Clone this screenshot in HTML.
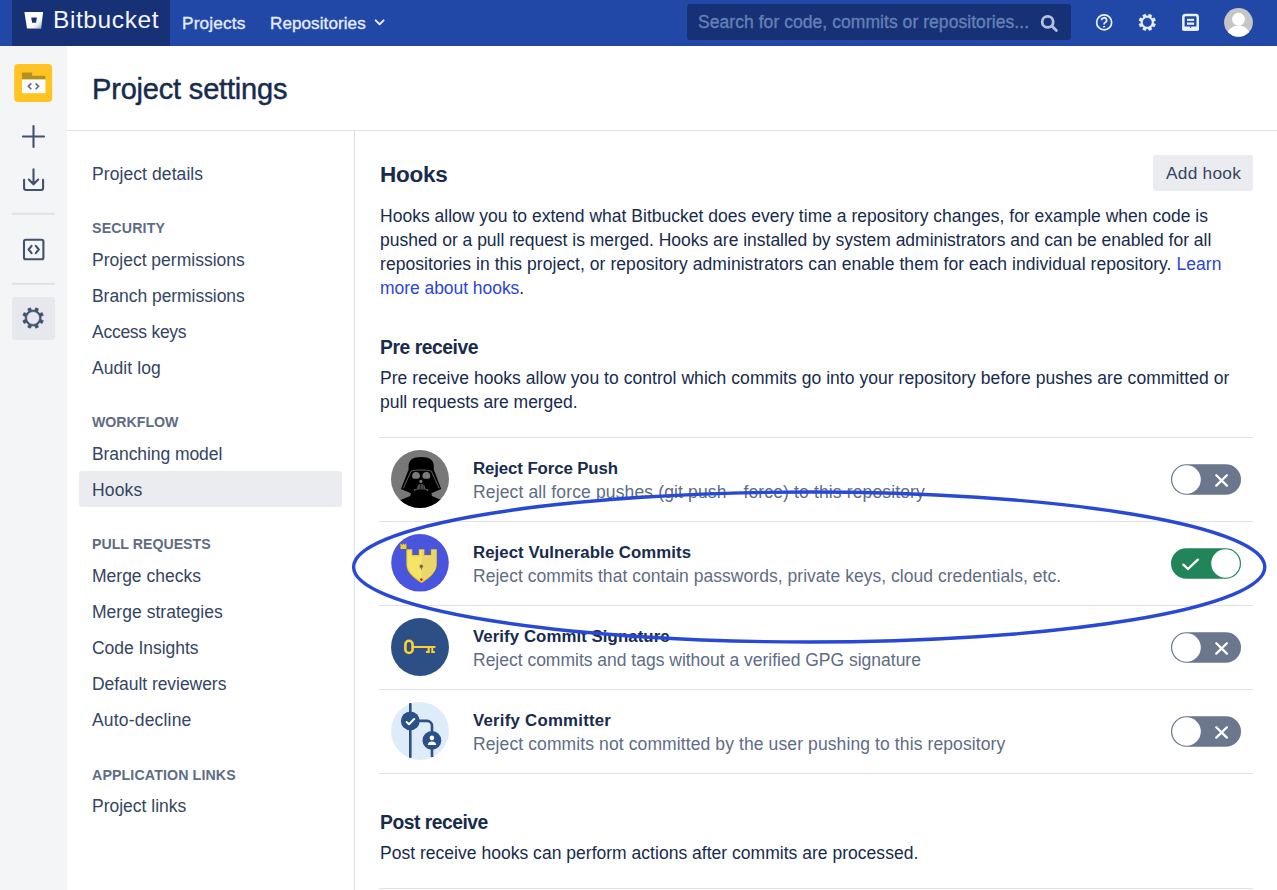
<!DOCTYPE html><html><head><meta charset="utf-8"><title>Hooks - Project settings</title><style>
html,body{margin:0;padding:0;}
body{width:1277px;height:890px;overflow:hidden;position:relative;background:#fff;font-family:"Liberation Sans", sans-serif;}
.t{position:absolute;white-space:nowrap;}
.a{position:absolute;}
.m{-webkit-text-stroke:0.35px currentColor;}
</style></head><body>
<div class="a" style="left:0;top:0;width:1277px;height:46px;background:#2148a6"></div>
<div class="a" style="left:12px;top:0;width:158px;height:46px;background:#173177"></div>
<svg class="a" style="left:0;top:0" width="60" height="46" viewBox="0 0 60 46">
<defs><linearGradient id="bg1" x1="0" y1="0" x2="1" y2="1"><stop offset="0.35" stop-color="#fff" stop-opacity="0"/><stop offset="1" stop-color="#173177" stop-opacity="0.55"/></linearGradient></defs>
<path d="M24.4 11.9 L43.1 11.9 L41.1 28.6 L27 28.6 Z" fill="#fff"/>
<path d="M31.5 17.5 L42.4 17.5 L41.1 28.6 L29.5 28.6 Z" fill="url(#bg1)"/>
<path d="M31.2 17.5 L36.9 17.5 L36.1 22.7 L32.1 22.7 Z" fill="#173177"/>
</svg>
<div class="t" style="left:53px;top:8px;font-size:24.5px;line-height:24.5px;color:#f4f6fb;font-weight:400;letter-spacing:0.590px;">Bitbucket</div>
<div class="t" style="left:182px;top:15px;font-size:17.3px;line-height:17.3px;color:#e3ecff;font-weight:400;letter-spacing:0.138px;"><span class="m">Projects</span></div>
<div class="t" style="left:270px;top:15px;font-size:17.1px;line-height:17.1px;color:#e3ecff;font-weight:400;letter-spacing:0.062px;"><span class="m">Repositories</span></div>
<svg class="a" style="left:372px;top:16px" width="16" height="12" viewBox="0 0 16 12"><path d="M3.7 4.4 L7.6 8.3 L11.6 4.4" stroke="#e3ecff" stroke-width="2" fill="none" stroke-linecap="round" stroke-linejoin="round"/></svg>
<div class="a" style="left:687px;top:4px;width:384px;height:36px;border-radius:3px;background:#173177"></div>
<div class="t" style="left:698px;top:14px;font-size:17.5px;line-height:17.5px;color:#6580b5;font-weight:400;letter-spacing:0.054px;"><span class="m">Search for code, commits or repositories...</span></div>
<svg class="a" style="left:1036px;top:11px" width="24" height="24" viewBox="0 0 24 24"><circle cx="11.7" cy="10.9" r="5.5" stroke="#b5c2df" stroke-width="2.8" fill="none"/><path d="M15.9 15.1 L20.4 19.6" stroke="#b5c2df" stroke-width="2.8" stroke-linecap="round"/></svg>
<svg class="a" style="left:1092px;top:10px" width="24" height="24" viewBox="0 0 24 24"><circle cx="12.15" cy="12.4" r="7.5" stroke="#e9f0ff" stroke-width="1.7" fill="none"/><path d="M9.6 10.3 a2.5 2.5 0 1 1 3.6 2.2 c-0.75 0.35 -1.1 0.8 -1.1 1.7 v0.4" stroke="#e9f0ff" stroke-width="1.8" fill="none" stroke-linecap="butt"/><rect x="11.1" y="16" width="2" height="1.4" fill="#e9f0ff"/></svg>
<svg class="a" style="left:0;top:0;overflow:visible" width="1" height="1"><path d="M1148.07 16.10 L1149.07 14.15 L1151.76 15.27 L1151.09 17.35 L1151.70 17.90 L1152.25 18.51 L1154.33 17.84 L1155.45 20.53 L1153.50 21.53 L1153.55 22.35 L1153.50 23.17 L1155.45 24.17 L1154.33 26.86 L1152.25 26.19 L1151.70 26.80 L1151.09 27.35 L1151.76 29.43 L1149.07 30.55 L1148.07 28.60 L1147.25 28.65 L1146.43 28.60 L1145.43 30.55 L1142.74 29.43 L1143.41 27.35 L1142.80 26.80 L1142.25 26.19 L1140.17 26.86 L1139.05 24.17 L1141.00 23.17 L1140.95 22.35 L1141.00 21.53 L1139.05 20.53 L1140.17 17.84 L1142.25 18.51 L1142.80 17.90 L1143.41 17.35 L1142.74 15.27 L1145.43 14.15 L1146.43 16.10 L1147.25 16.05 Z M1152.05 22.35 A4.8 4.8 0 1 0 1142.45 22.35 A4.8 4.8 0 1 0 1152.05 22.35 Z" fill="#e9f0ff" fill-rule="evenodd" stroke="#e9f0ff" stroke-width="0.6" stroke-linejoin="round"/></svg>
<svg class="a" style="left:1176px;top:8px" width="30" height="28" viewBox="1176 8 30 28"><rect x="1183.35" y="15.05" width="14.4" height="14.5" rx="2.2" fill="none" stroke="#e9f0ff" stroke-width="2.5"/><rect x="1182.1" y="26.6" width="16.9" height="4.2" rx="1.5" fill="#e9f0ff"/><path d="M1189.2 26.4 L1190.6 28 L1192 26.4 Z" fill="#2148a6"/><rect x="1187" y="18.8" width="7.1" height="2.1" fill="#e9f0ff"/><rect x="1187" y="22.5" width="7.1" height="2.3" fill="#e9f0ff"/></svg>
<svg class="a" style="left:1220px;top:3px" width="40" height="40" viewBox="1220 3 40 40"><defs><clipPath id="avc"><circle cx="1238.5" cy="22.4" r="14.4"/></clipPath></defs><circle cx="1238.5" cy="22.4" r="14.4" fill="#c6c6c6"/><g clip-path="url(#avc)" fill="#fff"><circle cx="1238.5" cy="19.2" r="6.4"/><ellipse cx="1238.5" cy="37" rx="11.8" ry="11.5"/></g></svg>
<div class="a" style="left:0;top:46px;width:67px;height:844px;background:#f4f5f7"></div>
<svg class="a" style="left:0;top:46px" width="67" height="300" viewBox="0 46 67 300">
<rect x="14.2" y="64" width="38" height="38" rx="4" fill="#ffc423"/>
<path d="M22 72.5 h10.2 v3.2 h13.2 v4.2 h-23.4z" fill="#b3911c"/>
<rect x="22" y="79.4" width="23.4" height="13.8" fill="#fff"/>
<path d="M31.3 83.4 L28.3 86.35 L31.3 89.3 M35.6 83.4 L38.6 86.35 L35.6 89.3" stroke="#5e6c84" stroke-width="1.6" fill="none"/>
<path d="M33.5 126 v21 M23 136.5 h21" stroke="#42526e" stroke-width="2.1" stroke-linecap="round"/>
<path d="M33.5 169.2 v14.6 M28.8 179.6 L33.5 184.3 L38.2 179.6 M24.1 179.8 v8.2 a2 2 0 0 0 2 2 h15 a2 2 0 0 0 2 -2 v-8.2" stroke="#42526e" stroke-width="2.1" fill="none" stroke-linecap="round" stroke-linejoin="round"/>
<rect x="12" y="212.8" width="43" height="2" fill="#dfe1e6"/>
<rect x="24" y="239.8" width="19.4" height="19.4" rx="1.8" fill="none" stroke="#42526e" stroke-width="2.1"/>
<path d="M31.6 245.8 L28.6 249.5 L31.6 253.2 M35.8 245.8 L38.8 249.5 L35.8 253.2" stroke="#42526e" stroke-width="2.1" fill="none" stroke-linecap="round" stroke-linejoin="round"/>
<rect x="12" y="282.8" width="43" height="2" fill="#dfe1e6"/>
<rect x="12" y="297" width="43" height="43" rx="3" fill="#e6e8ed"/>
<path d="M34.56 310.13 L35.75 307.74 L38.48 308.87 L37.63 311.41 L38.76 312.34 L39.69 313.47 L42.23 312.62 L43.36 315.35 L40.97 316.54 L41.10 318.00 L40.97 319.46 L43.36 320.65 L42.23 323.38 L39.69 322.53 L38.76 323.66 L37.63 324.59 L38.48 327.13 L35.75 328.26 L34.56 325.87 L33.10 326.00 L31.64 325.87 L30.45 328.26 L27.72 327.13 L28.57 324.59 L27.44 323.66 L26.51 322.53 L23.97 323.38 L22.84 320.65 L25.23 319.46 L25.10 318.00 L25.23 316.54 L22.84 315.35 L23.97 312.62 L26.51 313.47 L27.44 312.34 L28.57 311.41 L27.72 308.87 L30.45 307.74 L31.64 310.13 L33.10 310.00 Z M39.50 318.00 A6.4 6.4 0 1 0 26.70 318.00 A6.4 6.4 0 1 0 39.50 318.00 Z" fill="#42526e" fill-rule="evenodd" stroke="#42526e" stroke-width="0.6" stroke-linejoin="round"/>
</svg>
<div class="t" style="left:92px;top:75px;font-size:29px;line-height:29px;color:#172b4d;font-weight:400;letter-spacing:-0.184px;"><span style="-webkit-text-stroke:0.45px currentColor">Project settings</span></div>
<div class="a" style="left:67px;top:130px;width:1210px;height:1px;background:#dfe1e6"></div>
<div class="a" style="left:354px;top:131px;width:1px;height:759px;background:#dfe1e6"></div>
<div class="a" style="left:79px;top:471px;width:263px;height:36px;border-radius:3px;background:#ebecf0"></div>
<div class="t" style="left:92px;top:166px;font-size:17.5px;line-height:17.5px;color:#344563;font-weight:400;letter-spacing:0.084px;">Project details</div>
<div class="t" style="left:92px;top:221px;font-size:14.2px;line-height:14.2px;color:#5e6c84;font-weight:700;letter-spacing:0.181px;">SECURITY</div>
<div class="t" style="left:92px;top:252px;font-size:17.5px;line-height:17.5px;color:#344563;font-weight:400;letter-spacing:0.005px;">Project permissions</div>
<div class="t" style="left:92px;top:288px;font-size:17.5px;line-height:17.5px;color:#344563;font-weight:400;letter-spacing:-0.051px;">Branch permissions</div>
<div class="t" style="left:92px;top:324px;font-size:17.5px;line-height:17.5px;color:#344563;font-weight:400;letter-spacing:-0.265px;">Access keys</div>
<div class="t" style="left:92px;top:360px;font-size:17.5px;line-height:17.5px;color:#344563;font-weight:400;letter-spacing:0.074px;">Audit log</div>
<div class="t" style="left:92px;top:415px;font-size:14.2px;line-height:14.2px;color:#5e6c84;font-weight:700;letter-spacing:-0.027px;">WORKFLOW</div>
<div class="t" style="left:92px;top:446px;font-size:17.5px;line-height:17.5px;color:#344563;font-weight:400;letter-spacing:-0.073px;">Branching model</div>
<div class="t" style="left:92px;top:482px;font-size:17.5px;line-height:17.5px;color:#344563;font-weight:400;letter-spacing:0.173px;">Hooks</div>
<div class="t" style="left:92px;top:537px;font-size:14.2px;line-height:14.2px;color:#5e6c84;font-weight:700;letter-spacing:-0.007px;">PULL REQUESTS</div>
<div class="t" style="left:92px;top:568px;font-size:17.5px;line-height:17.5px;color:#344563;font-weight:400;letter-spacing:-0.003px;">Merge checks</div>
<div class="t" style="left:92px;top:604px;font-size:17.5px;line-height:17.5px;color:#344563;font-weight:400;letter-spacing:0.030px;">Merge strategies</div>
<div class="t" style="left:92px;top:640px;font-size:17.5px;line-height:17.5px;color:#344563;font-weight:400;letter-spacing:-0.035px;">Code Insights</div>
<div class="t" style="left:92px;top:676px;font-size:17.5px;line-height:17.5px;color:#344563;font-weight:400;letter-spacing:-0.050px;">Default reviewers</div>
<div class="t" style="left:92px;top:712px;font-size:17.5px;line-height:17.5px;color:#344563;font-weight:400;letter-spacing:0.182px;">Auto-decline</div>
<div class="t" style="left:92px;top:768px;font-size:14.2px;line-height:14.2px;color:#5e6c84;font-weight:700;letter-spacing:0.130px;">APPLICATION LINKS</div>
<div class="t" style="left:92px;top:798px;font-size:17.5px;line-height:17.5px;color:#344563;font-weight:400;letter-spacing:-0.004px;">Project links</div>
<div class="t" style="left:380px;top:164px;font-size:22.5px;line-height:22.5px;color:#172b4d;font-weight:700;letter-spacing:-0.266px;">Hooks</div>
<div class="a" style="left:1153px;top:155px;width:100px;height:35.7px;border-radius:3px;background:#ebecf0"></div>
<div class="t" style="left:1166px;top:165px;font-size:17.3px;line-height:17.3px;color:#344563;font-weight:400;letter-spacing:0.253px;">Add hook</div>
<div class="t" style="left:380px;top:208px;font-size:17.5px;line-height:17.5px;color:#172b4d;font-weight:400;letter-spacing:0.011px;">Hooks allow you to extend what Bitbucket does every time a repository changes, for example when code is</div>
<div class="t" style="left:380px;top:232px;font-size:17.5px;line-height:17.5px;color:#172b4d;font-weight:400;letter-spacing:-0.013px;">pushed or a pull request is merged. Hooks are installed by system administrators and can be enabled for all</div>
<div class="t" style="left:380px;top:256px;font-size:17.5px;line-height:17.5px;color:#172b4d;font-weight:400;letter-spacing:0.056px;">repositories in this project, or repository administrators can enable them for each individual repository. <span style="color:#2b46d3">Learn</span></div>
<div class="t" style="left:380px;top:280px;font-size:17.5px;line-height:17.5px;color:#172b4d;font-weight:400;letter-spacing:-0.048px;"><span style="color:#2b46d3">more about hooks</span>.</div>
<div class="t" style="left:380px;top:338px;font-size:19.3px;line-height:19.3px;color:#172b4d;font-weight:700;letter-spacing:-0.442px;">Pre receive</div>
<div class="t" style="left:380px;top:370px;font-size:17.5px;line-height:17.5px;color:#172b4d;font-weight:400;letter-spacing:0.047px;">Pre receive hooks allow you to control which commits go into your repository before pushes are committed or</div>
<div class="t" style="left:380px;top:394px;font-size:17.5px;line-height:17.5px;color:#172b4d;font-weight:400;letter-spacing:-0.036px;">pull requests are merged.</div>
<div class="a" style="left:379px;top:437px;width:874px;height:1px;background:#dfe1e6"></div>
<div class="a" style="left:379px;top:521px;width:874px;height:1px;background:#dfe1e6"></div>
<div class="a" style="left:379px;top:605px;width:874px;height:1px;background:#dfe1e6"></div>
<div class="a" style="left:379px;top:689px;width:874px;height:1px;background:#dfe1e6"></div>
<div class="a" style="left:379px;top:773px;width:874px;height:1px;background:#dfe1e6"></div>
<div class="t" style="left:473px;top:461px;font-size:16.8px;line-height:16.8px;color:#172b4d;font-weight:700;letter-spacing:-0.089px;">Reject Force Push</div>
<div class="t" style="left:473px;top:484px;font-size:17.5px;line-height:17.5px;color:#5e6c84;font-weight:400;letter-spacing:0.138px;">Reject all force pushes (git push --force) to this repository</div>
<svg class="a" style="left:1171px;top:464px" width="70" height="31" viewBox="0 0 70 31"><rect x="0" y="0.2" width="70" height="30.6" rx="15.3" fill="#6b778c"/><circle cx="15.5" cy="15.5" r="14.3" fill="#fff"/><path d="M45.3 11.3 L55.9 21.6 M55.9 11.3 L45.3 21.6" stroke="#fff" stroke-width="2.3" stroke-linecap="round"/></svg>
<div class="t" style="left:473px;top:545px;font-size:16.8px;line-height:16.8px;color:#172b4d;font-weight:700;letter-spacing:0.055px;">Reject Vulnerable Commits</div>
<div class="t" style="left:473px;top:568px;font-size:17.5px;line-height:17.5px;color:#5e6c84;font-weight:400;letter-spacing:0.034px;">Reject commits that contain passwords, private keys, cloud credentials, etc.</div>
<svg class="a" style="left:1171px;top:548px" width="70" height="31" viewBox="0 0 70 31"><rect x="0" y="0.2" width="70" height="30.6" rx="15.3" fill="#218559"/><circle cx="54.5" cy="15.5" r="14.3" fill="#fff"/><path d="M12.3 16.6 L17 21 L26.8 11.6" stroke="#fff" stroke-width="2.3" fill="none" stroke-linecap="round" stroke-linejoin="round"/></svg>
<div class="t" style="left:473px;top:629px;font-size:16.8px;line-height:16.8px;color:#172b4d;font-weight:700;letter-spacing:0.077px;">Verify Commit Signature</div>
<div class="t" style="left:473px;top:652px;font-size:17.5px;line-height:17.5px;color:#5e6c84;font-weight:400;letter-spacing:-0.009px;">Reject commits and tags without a verified GPG signature</div>
<svg class="a" style="left:1171px;top:632px" width="70" height="31" viewBox="0 0 70 31"><rect x="0" y="0.2" width="70" height="30.6" rx="15.3" fill="#6b778c"/><circle cx="15.5" cy="15.5" r="14.3" fill="#fff"/><path d="M45.3 11.3 L55.9 21.6 M55.9 11.3 L45.3 21.6" stroke="#fff" stroke-width="2.3" stroke-linecap="round"/></svg>
<div class="t" style="left:473px;top:713px;font-size:16.8px;line-height:16.8px;color:#172b4d;font-weight:700;letter-spacing:0.240px;">Verify Committer</div>
<div class="t" style="left:473px;top:736px;font-size:17.5px;line-height:17.5px;color:#5e6c84;font-weight:400;letter-spacing:0.107px;">Reject commits not committed by the user pushing to this repository</div>
<svg class="a" style="left:1171px;top:716px" width="70" height="31" viewBox="0 0 70 31"><rect x="0" y="0.2" width="70" height="30.6" rx="15.3" fill="#6b778c"/><circle cx="15.5" cy="15.5" r="14.3" fill="#fff"/><path d="M45.3 11.3 L55.9 21.6 M55.9 11.3 L45.3 21.6" stroke="#fff" stroke-width="2.3" stroke-linecap="round"/></svg>
<div class="t" style="left:380px;top:813px;font-size:19.3px;line-height:19.3px;color:#172b4d;font-weight:700;letter-spacing:-0.484px;">Post receive</div>
<div class="t" style="left:380px;top:845px;font-size:17.5px;line-height:17.5px;color:#172b4d;font-weight:400;letter-spacing:0.021px;">Post receive hooks can perform actions after commits are processed.</div>
<div class="a" style="left:379px;top:888px;width:874px;height:1px;background:#dfe1e6"></div>
<svg class="a" style="left:380px;top:440px" width="80" height="340" viewBox="380 440 80 340">
<defs>
<clipPath id="c1"><circle cx="420" cy="479" r="29"/></clipPath>
<clipPath id="c4"><circle cx="420" cy="731" r="29"/></clipPath>
</defs>
<circle cx="420" cy="479" r="29" fill="#787878"/>
<g clip-path="url(#c1)">
<path d="M408.6 469.5 L408.6 466 C408.6 460 413 456.9 421.2 456.9 C429.4 456.9 433.8 460 433.8 466 L433.8 469.5 L441.2 489 L431.2 493.2 L410.9 493.2 L400.9 489 Z" fill="#000"/>
<path d="M410.9 492.5 L431.3 492.5 L431.9 496.1 L440 499.4 L453 505 L453 512 L387 512 L387 505.6 L400.6 500.1 L410.3 496.1 Z" fill="#000"/>
<path d="M403.3 488.3 L411 471.2 C414 469.6 428 469.6 431.3 471.2 L439.2 488.3" stroke="#7a7a7a" stroke-width="0.8" fill="none"/>
<path d="M412.2 477 C411.8 473.6 413.6 472 416 472 C418.4 472 420.2 473.4 420 476.6 C419.8 478.6 418 478.8 416 478.8 C413.8 478.8 412.4 478.5 412.2 477 Z M422.4 476.6 C422.2 473.4 424 472 426.4 472 C428.8 472 430.6 473.6 430.2 477 C430 478.5 428.6 478.8 426.4 478.8 C424.4 478.8 422.6 478.6 422.4 476.6 Z" fill="#7a7a7a"/>
<circle cx="420.9" cy="481.4" r="1.6" fill="#7a7a7a"/>
<path d="M417.5 489.6 L417.5 487 C417.5 485 419 483.9 421.1 483.9 C423.3 483.9 424.8 485 424.8 487 L424.8 489.6 Z" fill="#6e6e6e"/>
<path d="M419.1 484.5 v5.2 M420.5 484 v5.7 M421.9 484 v5.7 M423.3 484.5 v5.2" stroke="#000" stroke-width="0.6"/>
<path d="M414.7 490 L417.6 488.8 M427.6 490 L424.7 488.8" stroke="#7a7a7a" stroke-width="0.8"/>
<circle cx="414.7" cy="490" r="0.8" fill="#7a7a7a"/><circle cx="427.6" cy="490" r="0.8" fill="#7a7a7a"/>
</g>
<circle cx="420" cy="562.8" r="28.8" fill="#4a55de"/>
<defs><clipPath id="rh"><rect x="421.6" y="540" width="20" height="50"/></clipPath></defs>
<path d="M406.4 549.2 H412.3 V555.1 H418.8 V549.2 H424.4 V555.1 H430.9 V549.2 H436.8 V564.4 C436.8 572 429 578.5 421.6 582.9 C414 578.5 406.4 572 406.4 564.4 Z" fill="#f2cf18"/>
<path id="shin" d="M407.5 550.3 H411.2 V556.2 H419.9 V550.3 H423.3 V556.2 H432 V550.3 H435.7 V564.4 C435.7 571.3 428.4 577.2 421.6 581.5 C414.8 577.2 407.5 571.3 407.5 564.4 Z" fill="#f5e468"/>
<path d="M407.5 550.3 H411.2 V556.2 H419.9 V550.3 H423.3 V556.2 H432 V550.3 H435.7 V564.4 C435.7 571.3 428.4 577.2 421.6 581.5 C414.8 577.2 407.5 571.3 407.5 564.4 Z" fill="#e9d66c" clip-path="url(#rh)"/>
<path d="M400.5 543.3 L402.3 545 L403.5 543.3 L404.7 545 L406.4 543.3 L406.4 549 L400.5 549 Z" fill="#f2d21e"/>
<circle cx="421.3" cy="566.2" r="1.8" fill="#7b6a4a"/>
<path d="M420.4 567 L422.2 567 L421.3 570.4 Z" fill="#7b6a4a"/>
<circle cx="421.4" cy="579.6" r="1.3" fill="#e0201a"/>
<circle cx="420" cy="647" r="29" fill="#2c5086"/>
<g fill="none" stroke="#ffcf33">
<rect x="405.4" y="640.8" width="7.2" height="12.2" rx="3.6" ry="3.6" stroke-width="2.6"/>
<path d="M412.6 647 L434.6 647" stroke-width="2.2" stroke-linecap="round"/>
</g>
<path d="M427.6 648 h2.2 v3.4 h-2.2z M431.3 648 h1.9 v3.4 h-1.9z M426 651.1 h3.8 v2 h-3.8z M431.2 651.1 h3.6 v2 h-3.6z" fill="#ffcf33"/>
<circle cx="420" cy="731" r="29" fill="#deecf9"/>
<g stroke="#2a5088" fill="none" stroke-width="2.6">
<path d="M410.3 703.1 V757.8"/>
<path d="M410.3 720.9 H427 A5 5 0 0 1 432 725.9 V757.1"/>
</g>
<circle cx="410.3" cy="720.9" r="9.4" fill="#2a5088"/>
<circle cx="431.9" cy="740.4" r="9.4" fill="#2a5088"/>
<path d="M406.6 722.1 L409 724.3 L414.2 719" stroke="#fff" stroke-width="2" fill="none" stroke-linecap="round" stroke-linejoin="round"/>
<circle cx="431.9" cy="737.9" r="2.3" fill="#fff"/>
<path d="M427.7 745 C428 742.5 429.7 741.5 431.9 741.5 C434.1 741.5 436 742.5 436.3 745 Z" fill="#fff"/>
</svg>
<svg class="a" style="left:0;top:0;overflow:visible" width="1" height="1">
<ellipse cx="809.2" cy="567" rx="455.6" ry="75" fill="none" stroke="#2848d6" stroke-width="3.4"/>
</svg>
</body></html>
